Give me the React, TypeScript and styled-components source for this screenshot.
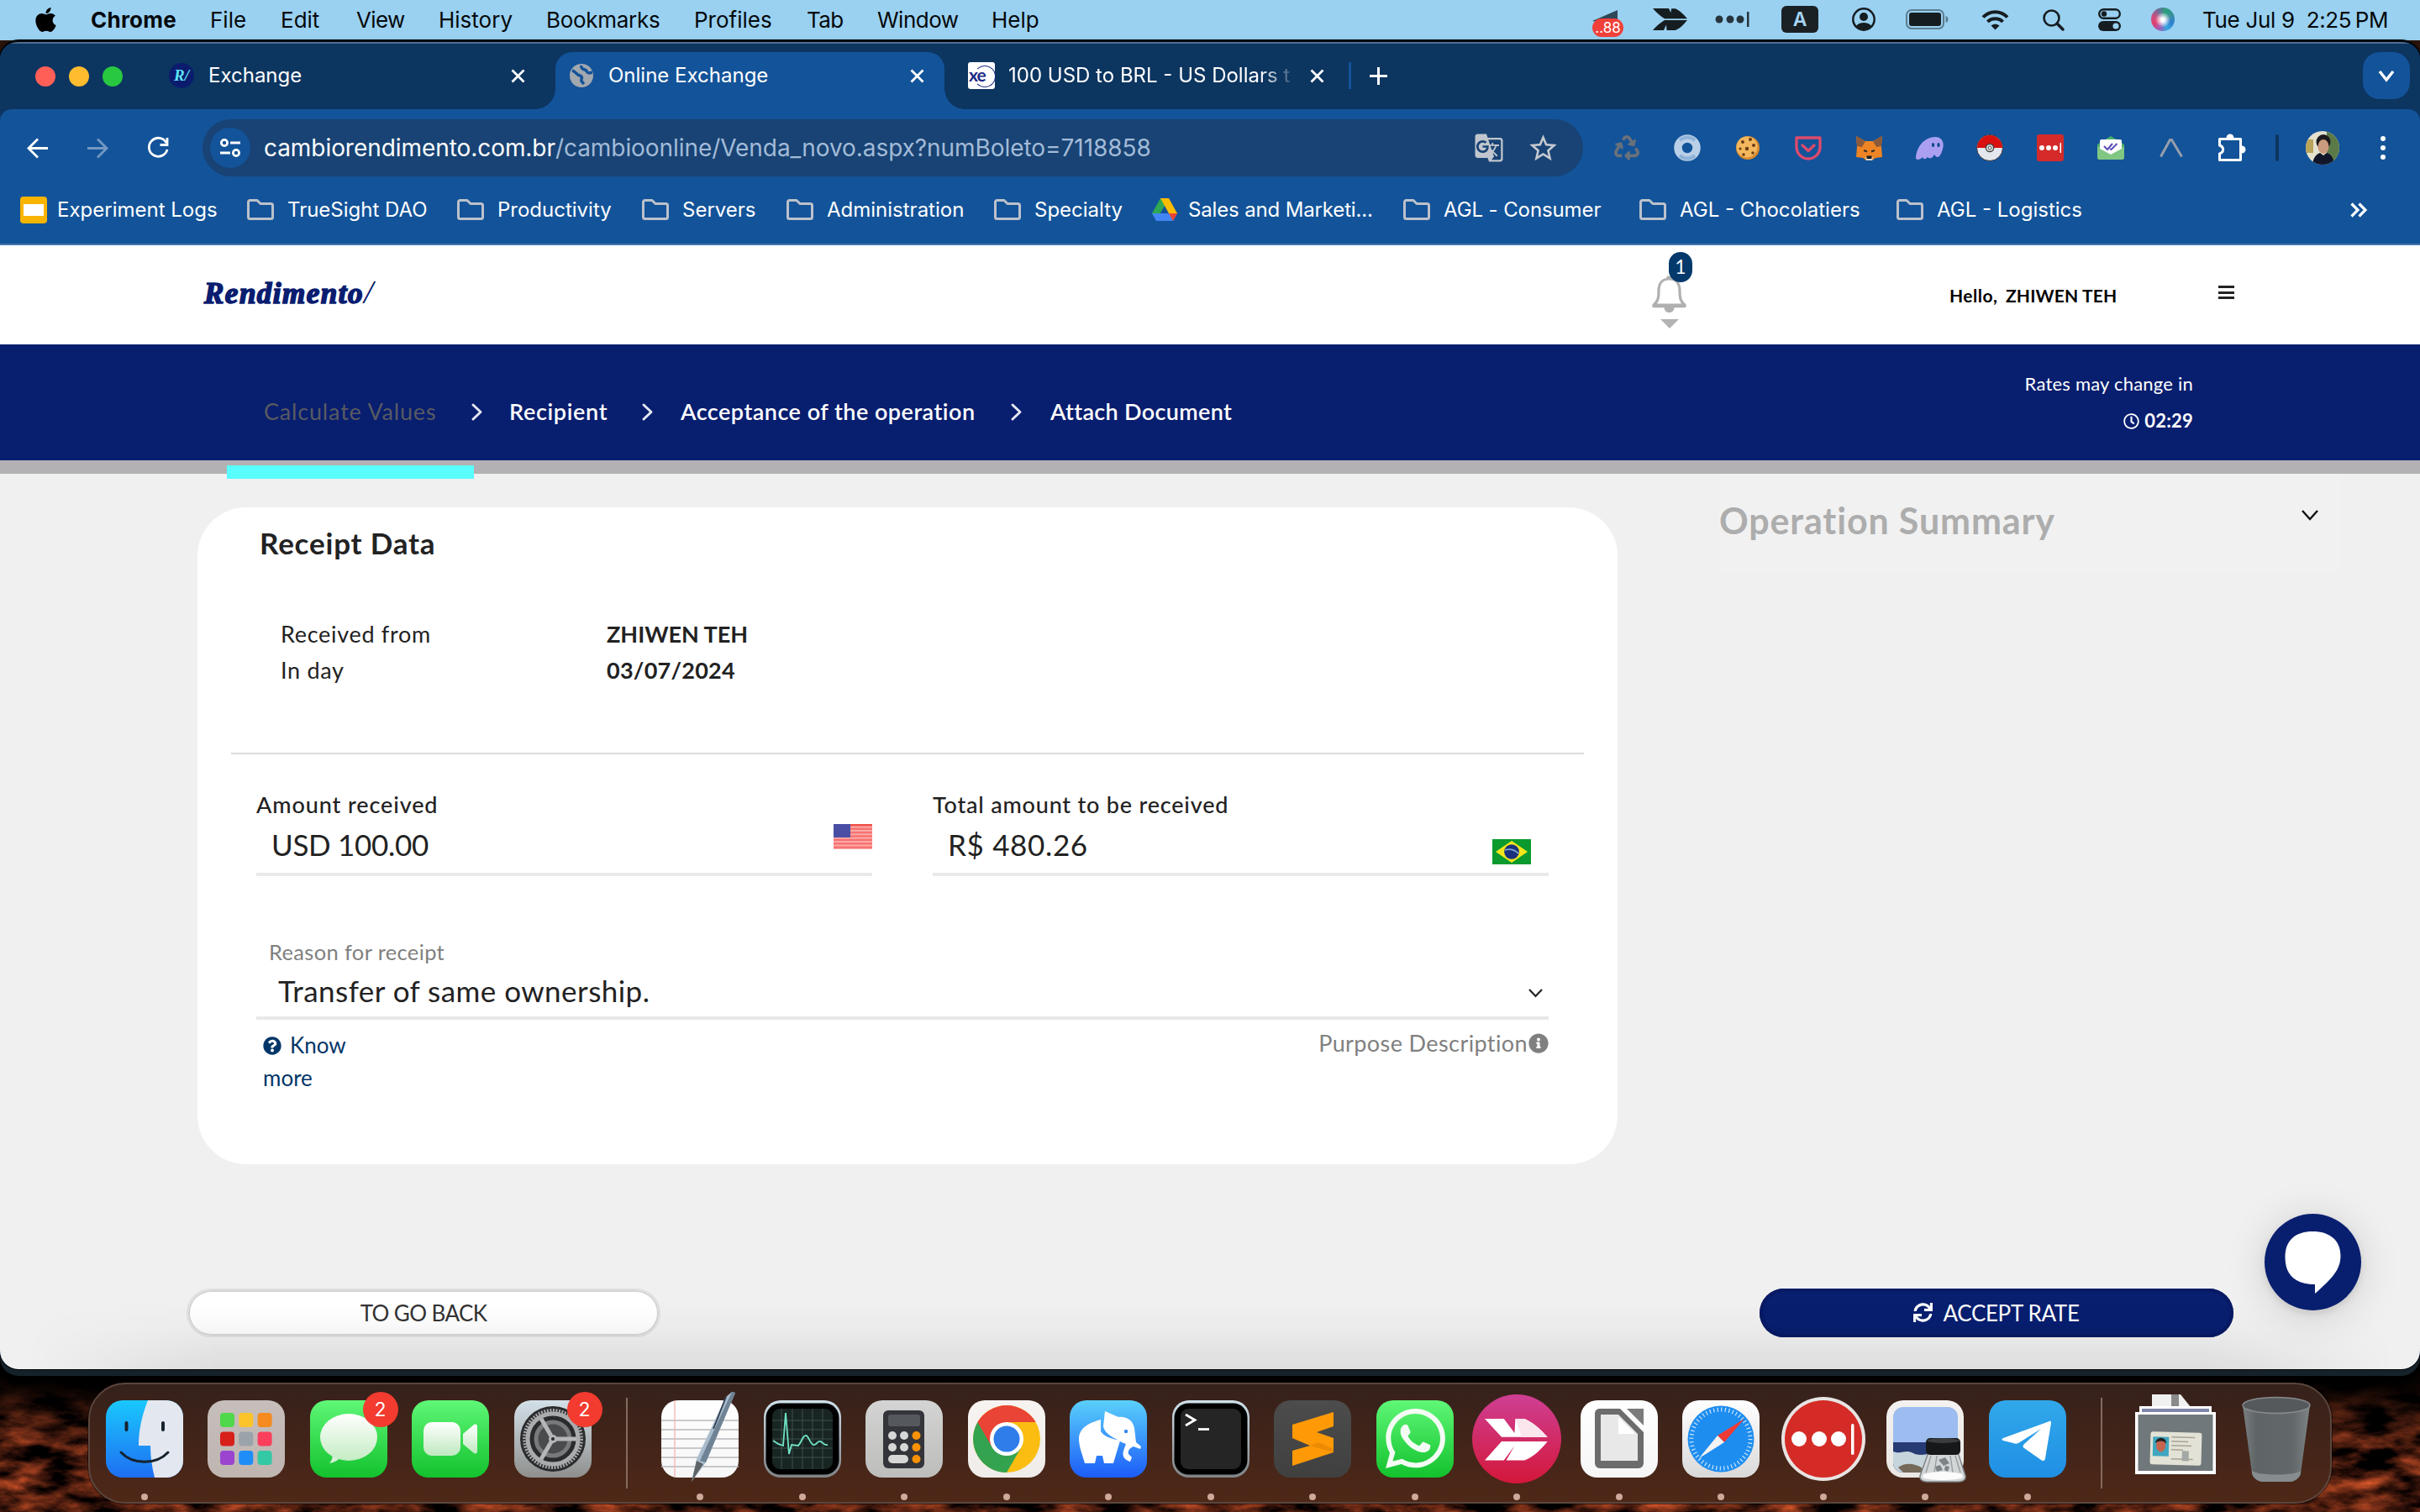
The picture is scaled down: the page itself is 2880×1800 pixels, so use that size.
import React from "react";
import styled, { createGlobalStyle, css } from "styled-components";
import { FaApple, FaInfoCircle, FaQuestionCircle, FaRecycle, FaRegClock, FaSync, FaWhatsapp } from "react-icons/fa";
import { MdGTranslate, MdStarBorder } from "react-icons/md";

const ui = `"Inter", "Liberation Sans", sans-serif`;
const brand = `"Lato", "Open Sans", sans-serif`;

const GlobalStyle = createGlobalStyle`
  * { box-sizing: border-box; }
  body { margin: 0; background: #000; }
  svg { display: block; flex: none; overflow: visible; }
`;

/* ---------- desktop ---------- */

const Desktop = styled.div`
  position: relative;
  width: 2880px;
  height: 1800px;
  overflow: hidden;
  display: flex;
  flex-direction: column;
  font-family: ${ui};
  background: #2a140b;
`;

const WallpaperLayer = styled.div`
  position: absolute;
  left: 0;
  bottom: 0;
  width: 2880px;
  height: 180px;
`;

const MenuBar = styled.div`
  position: relative;
  height: 48px;
  padding: 0 38px 2px 0;
  display: flex;
  align-items: center;
  background: #9ad1f1;
  color: #06131c;
`;

const MenuItem = styled.span<{ $w: number; $ls?: number; $bold?: boolean }>`
  width: ${(p) => p.$w}px;
  font-size: 26px;
  font-weight: ${(p) => (p.$bold ? 700 : 400)};
  letter-spacing: ${(p) => p.$ls ?? 0}px;
  white-space: pre;
  color: #05080b;
`;

const Slot = styled.div<{ $ml?: number; $w?: number }>`
  flex: none;
  margin-left: ${(p) => p.$ml ?? 0}px;
  width: ${(p) => (p.$w ? `${p.$w}px` : "auto")};
  display: flex;
  justify-content: center;
  align-items: center;
`;

const Spacer = styled.div`
  flex: 1;
`;

const TrayBadgeWrap = styled.div`
  position: relative;
  width: 37px;
  height: 48px;
`;

const TrayBadge = styled.span`
  position: absolute;
  left: 0;
  top: 23px;
  width: 37px;
  height: 22px;
  border-radius: 11px;
  background: #f1403a;
  color: #fff;
  font-size: 17px;
  line-height: 22px;
  text-align: center;
`;

const InputBox = styled.div`
  width: 44px;
  height: 32px;
  border-radius: 6px;
  background: #1a2125;
  color: #a5d5f2;
  font-size: 23px;
  font-weight: 600;
  line-height: 33px;
  text-align: center;
`;

const Siri = styled.div`
  width: 28px;
  height: 28px;
  border-radius: 50%;
  background: radial-gradient(circle at 50% 52%, #fff 0 10%, rgba(255, 255, 255, 0) 45%),
    conic-gradient(from 20deg, #27a07c, #3b8f9c, #2f7fd0, #35a5e0, #a05bb5, #e0406f, #c8507f, #6b6f9a, #27a07c);
`;

/* ---------- browser window ---------- */

const Window = styled.div`
  position: relative;
  height: 1582px;
  border-top: 2px solid #05080b;
  border-radius: 22px;
  overflow: hidden;
  display: flex;
  flex-direction: column;
  background: #0c3560;
  box-shadow: 0 0 0 1px #000, 0 8px 0 0 #16222a, 0 16px 14px 6px #000;
`;

const TabStrip = styled.div`
  height: 80px;
  border-top: 2px solid #4f6e8e;
  display: flex;
  align-items: flex-end;
  background: #0c3560;
`;

const Lights = styled.div`
  width: 188px;
  height: 68px;
  padding: 0 0 11px 42px;
  display: flex;
  align-items: center;
  gap: 16px;
`;

const Light = styled.i<{ $c: string }>`
  width: 24px;
  height: 24px;
  border-radius: 50%;
  background: ${(p) => p.$c};
`;

const Tab = styled.div<{ $w: number; $pl: number; $pr: number; $active?: boolean }>`
  position: relative;
  width: ${(p) => p.$w}px;
  height: 68px;
  padding: 0 ${(p) => p.$pr}px 12px ${(p) => p.$pl}px;
  display: flex;
  align-items: center;
  color: #fff;
  font-size: 24px;
  ${(p) =>
    p.$active &&
    css`
      background: #135399;
      border-radius: 20px 20px 0 0;
      &::before,
      &::after {
        content: "";
        position: absolute;
        bottom: 0;
        width: 24px;
        height: 24px;
      }
      &::before {
        left: -24px;
        background: radial-gradient(circle at 0 0, transparent 23.5px, #135399 24px);
      }
      &::after {
        right: -24px;
        background: radial-gradient(circle at 100% 0, transparent 23.5px, #135399 24px);
      }
    `}
`;

const TabTitle = styled.span<{ $ml: number; $fade?: boolean }>`
  flex: 1;
  min-width: 0;
  margin-left: ${(p) => p.$ml}px;
  margin-right: 18px;
  overflow: hidden;
  white-space: nowrap;
  line-height: 34px;
  ${(p) => p.$fade && css`mask-image: linear-gradient(90deg, #000 88%, transparent 101%);`}
`;

const RendimentoFavicon = styled.i`
  width: 30px;
  height: 30px;
  border-radius: 50%;
  background: #0b1c6e;
  color: #5ce4f5;
  font: italic 700 19px/30px "Liberation Serif", serif;
  text-align: center;
`;

const XeFavicon = styled.i`
  position: relative;
  width: 32px;
  height: 32px;
  padding-left: 1px;
  border-radius: 3px;
  background: #fff;
  color: #1c2a86;
  font: 700 21px/29px ${brand};
  letter-spacing: -1px;
  &::after {
    content: "";
    position: absolute;
    left: 7px;
    top: 4px;
    width: 24px;
    height: 24px;
    border: 1.5px solid #1c2a86;
    border-left-color: transparent;
    border-radius: 50%;
  }
`;

const TabDivider = styled.i`
  width: 3px;
  height: 32px;
  margin: 0 22px 24px 0;
  background: #135399;
`;

const StripButton = styled.div`
  width: 56px;
  height: 56px;
  margin: 0 12px 12px auto;
  border-radius: 20px;
  background: #135399;
  display: flex;
  align-items: center;
  justify-content: center;
`;

const NewTab = styled.div`
  height: 68px;
  padding-bottom: 12px;
  display: flex;
  align-items: center;
`;

const Chrome = styled.div`
  background: #135399;
  border-radius: 14px 14px 0 0;
  border-bottom: 2px solid #4577b0;
  height: 162px;
`;

const Toolbar = styled.div`
  height: 92px;
  padding-left: 28px;
  display: flex;
  align-items: center;
`;

const NavButton = styled.div`
  width: 32px;
  margin-right: 40px;
  display: flex;
  justify-content: center;
`;

const Omnibox = styled.div`
  width: 1643px;
  height: 68px;
  margin: 0 16px 0 -3px;
  padding: 0 28px 0 9px;
  border-radius: 34px;
  background: #184374;
  display: flex;
  align-items: center;
  font-size: 28px;
  letter-spacing: -0.06px;
  color: #fff;
`;

const SiteInfo = styled.div`
  width: 48px;
  height: 48px;
  margin-right: 16px;
  border-radius: 50%;
  background: #135399;
  display: flex;
  align-items: center;
  justify-content: center;
`;

const UrlPath = styled.span`
  color: #a3bbd8;
`;

const Extension = styled.div`
  width: 72px;
  height: 40px;
  display: flex;
  align-items: center;
  justify-content: center;
`;

const Bookmarks = styled.div`
  height: 66px;
  padding: 0 0 11px 24px;
  display: flex;
  align-items: center;
  color: #fff;
  font-size: 24px;
`;

const Bookmark = styled.div<{ $w: number; $ls?: number; $gap?: number }>`
  width: ${(p) => p.$w}px;
  display: flex;
  align-items: center;
  gap: ${(p) => p.$gap ?? 16}px;
  letter-spacing: ${(p) => p.$ls ?? 0}px;
  white-space: nowrap;
`;

const SheetIcon = styled.i`
  width: 32px;
  height: 32px;
  border-radius: 4px;
  border: 4px solid #f9b400;
  border-width: 9px 4px;
  background: #fff;
  margin-right: -4px;
`;

const PasswordTile = styled.div`
  width: 32px;
  height: 32px;
  border-radius: 3px;
  background: #d42b2a;
  display: flex;
  align-items: center;
  justify-content: center;
`;

const ToolbarDivider = styled.i`
  width: 4px;
  height: 32px;
  margin: 0 32px 0 16px;
  border-radius: 2px;
  background: #0c3560;
`;

const Avatar = styled.div`
  width: 40px;
  height: 40px;
  border-radius: 50%;
  overflow: hidden;
`;

/* ---------- page ---------- */

const Page = styled.div`
  position: relative;
  flex: 1;
  background: #f0f0f0;
  font-family: ${brand};
  color: #222;
`;

const Header = styled.div`
  height: 118px;
  padding-left: 243px;
  display: flex;
  background: #fff;
`;

const Logo = styled.div`
  width: 1723px;
  padding-top: 34px;
  color: #0a1d70;
  font: italic 700 35px/44px "Liberation Serif", serif;
  letter-spacing: 1.5px;
  -webkit-text-stroke: 1.7px #0a1d70;
`;

const LogoSlash = styled.span`
  font-weight: 400;
  font-size: 40px;
  -webkit-text-stroke: 0;
`;

const Bell = styled.div`
  position: relative;
  width: 41px;
  margin-right: 313px;
  padding-top: 35px;
  display: flex;
  flex-direction: column;
  align-items: center;
`;

const BellBadge = styled.span`
  position: absolute;
  left: 20px;
  top: 8px;
  width: 28px;
  height: 36px;
  border-radius: 14px;
  background: #03396b;
  color: #fff;
  font-size: 23px;
  line-height: 35px;
  text-align: center;
`;

const BellCaret = styled.i`
  margin-top: 7px;
  border: 11px solid transparent;
  border-top: 11px solid #b3b3b3;
  border-bottom: 0;
`;

const Greeting = styled.div`
  width: 320px;
  padding-top: 40px;
  display: flex;
  color: #000;
  font-size: 21px;
  line-height: 39px;
  font-weight: 700;
`;

const Hello = styled.span`
  width: 67px;
  letter-spacing: 0.5px;
`;

const UserName = styled.span`
  letter-spacing: 0.15px;
`;

const Hamburger = styled.div`
  width: 19px;
  height: 16px;
  margin-top: 48px;
  display: flex;
  flex-direction: column;
  justify-content: space-between;
`;

const HamburgerLine = styled.i`
  height: 3px;
  background: #222;
`;

const StepBar = styled.div`
  height: 138px;
  padding: 0 270px 0 314px;
  display: flex;
  background: #081e6f;
  color: #fff;
`;

const Steps = styled.div`
  flex: 1;
  display: flex;
  padding-top: 60px;
  height: 100px;
  align-items: center;
`;

const Step = styled.span<{ $w: number; $ls: number; $done?: boolean }>`
  width: ${(p) => p.$w}px;
  font-size: 27px;
  line-height: 40px;
  font-weight: ${(p) => (p.$done ? 400 : 600)};
  letter-spacing: ${(p) => p.$ls}px;
  color: ${(p) => (p.$done ? "#585a62" : "#fff")};
  white-space: nowrap;
`;

const StepArrow = styled.div<{ $w: number }>`
  width: ${(p) => p.$w}px;
`;

const Rates = styled.div`
  padding-top: 27px;
  display: flex;
  flex-direction: column;
  align-items: flex-end;
  font-size: 22px;
  line-height: 40px;
  letter-spacing: 0.22px;
`;

const Timer = styled.div`
  margin-top: 4px;
  display: flex;
  align-items: center;
  gap: 6px;
  font-weight: 700;
`;

const Progress = styled.div`
  position: relative;
  height: 16px;
  background: #b3b1b3;
`;

const ProgressMark = styled.i`
  position: absolute;
  z-index: 1;
  left: 270px;
  top: 6px;
  width: 294px;
  height: 16px;
  background: #59fefe;
`;

const Main = styled.div`
  height: 822px;
  padding-left: 235px;
  display: flex;
  align-items: flex-start;
`;

const Card = styled.div`
  width: 1690px;
  height: 782px;
  margin: 40px 120px 0 0;
  padding: 22px 82px 0 70px;
  border-radius: 58px;
  background: #fff;
`;

const CardTitle = styled.div`
  padding-left: 4px;
  font-size: 35px;
  line-height: 40px;
  font-weight: 700;
  letter-spacing: 0.8px;
`;

const Facts = styled.div`
  margin: 67px 0 77px 29px;
`;

const Fact = styled.div`
  display: grid;
  grid-template-columns: 388px 1fr;
  font-size: 27px;
  line-height: 43px;
  letter-spacing: 0.7px;
`;

const FactValue = styled.b<{ $ls: number }>`
  letter-spacing: ${(p) => p.$ls}px;
`;

const Rule = styled.div`
  width: 1610px;
  height: 2px;
  margin-left: -30px;
  background: #dcdcdf;
`;

const Amounts = styled.div`
  margin-top: 39px;
  display: grid;
  grid-template-columns: 733px 733px;
  column-gap: 72px;
`;

const AmountLabel = styled.div<{ $ls: number }>`
  padding-top: 1px;
  font-size: 27px;
  line-height: 39px;
  font-weight: 500;
  letter-spacing: ${(p) => p.$ls}px;
`;

const AmountValue = styled.div<{ $ls: number; $flagTop: number; $flagRight: number }>`
  height: 66px;
  padding: 4px 0 0 18px;
  border-bottom: 4px solid #e9e9e9;
  display: flex;
  justify-content: space-between;
  font-size: 35px;
  line-height: 49px;
  letter-spacing: ${(p) => p.$ls}px;
  svg {
    margin: ${(p) => p.$flagTop}px ${(p) => p.$flagRight}px 0 0;
  }
`;

const ReasonLabel = styled.div`
  margin: 70px 0 0 15px;
  color: #808080;
  font-size: 25.5px;
  line-height: 40px;
  letter-spacing: 0.35px;
`;

const Select = styled.div`
  height: 61px;
  padding: 0 7px 4px 26px;
  border-bottom: 4px solid #e9e9e9;
  display: flex;
  align-items: center;
  justify-content: space-between;
  font-size: 35px;
  line-height: 53px;
  letter-spacing: 0.46px;
  svg {
    margin-top: 4px;
  }
`;

const Hints = styled.div`
  padding: 11px 0 0 8px;
  display: flex;
  justify-content: space-between;
  align-items: flex-start;
`;

const KnowMore = styled.a`
  width: 120px;
  color: #033668;
  font-size: 26px;
  line-height: 39px;
  svg {
    display: inline-block;
    vertical-align: -2px;
    margin-right: 10px;
  }
`;

const Purpose = styled.div`
  display: flex;
  align-items: center;
  gap: 1px;
  margin-top: -3px;
  color: #808080;
  font-size: 27px;
  line-height: 40px;
  letter-spacing: 0.4px;
`;

const Summary = styled.div`
  width: 740px;
  height: 118px;
  padding: 32px 26px 0 1px;
  background: #f1f1f1;
  display: flex;
  justify-content: space-between;
  color: #adadad;
  font-size: 43px;
  line-height: 48px;
  font-weight: 700;
  letter-spacing: 0.85px;
  svg {
    margin-top: 11px;
  }
`;

const Actions = styled.div`
  margin-top: 148px;
  padding: 0 222px;
  display: flex;
  justify-content: space-between;
`;

const PillButton = styled.div<{ $primary?: boolean }>`
  width: 564px;
  height: 58px;
  border-radius: 29px;
  display: flex;
  align-items: center;
  justify-content: center;
  gap: 12px;
  font-size: 26px;
  padding-bottom: 1px;
  ${(p) =>
    p.$primary
      ? css`
          background: #081e6f;
          color: #fff;
          letter-spacing: -0.33px;
          box-shadow: inset 0 0 0 4px #071a63;
        `
      : css`
          background: linear-gradient(#fff 60%, #fafafa);
          color: #333;
          letter-spacing: -0.6px;
          border: 2px solid #dfdfdf;
          box-shadow: inset 0 0 0 2px #d4d4d4;
        `}
`;

const BottomShade = styled.div`
  position: absolute;
  left: 0;
  right: 0;
  bottom: 0;
  height: 80px;
  background: linear-gradient(rgba(0, 0, 0, 0), rgba(0, 0, 0, 0.02) 40%, rgba(0, 0, 0, 0.08));
  mask-image: linear-gradient(90deg, transparent 30px, #000 260px, #000 2620px, transparent 2850px);
  pointer-events: none;
`;

const ChatButton = styled.div`
  position: absolute;
  left: 2695px;
  top: 1153px;
  width: 115px;
  height: 115px;
  border-radius: 50%;
  background: #081e6f;
  box-shadow: 0 6px 50px rgba(0, 0, 0, 0.14), 0 4px 10px rgba(0, 0, 0, 0.1);
`;

/* ---------- dock ---------- */

const Dock = styled.div`
  position: relative;
  width: 2670px;
  height: 144px;
  margin: 16px 0 0 105px;
  padding-left: 4px;
  border: 2px solid #5b463d;
  border-radius: 44px;
  display: flex;
  background: linear-gradient(#35211b, #452519 60%, #4e2817);
  box-shadow: 0 0 0 1px rgba(0, 0, 0, 0.5);
`;

const DockCell = styled.div<{ $w?: number; $running?: boolean }>`
  position: relative;
  width: ${(p) => p.$w ?? 121.5}px;
  padding-top: 19px;
  display: flex;
  flex-direction: column;
  align-items: center;
  ${(p) =>
    p.$running &&
    css`
      &::after {
        content: "";
        width: 8px;
        height: 8px;
        margin-top: 19px;
        border-radius: 50%;
        background: #cfa99b;
      }
    `}
`;

const DockDivider = styled.i<{ $l: number; $r: number }>`
  width: 2px;
  height: 108px;
  margin: 16px ${(p) => p.$r}px 0 ${(p) => p.$l}px;
  background: #856a5e;
`;

const DockBadge = styled.span`
  position: absolute;
  right: 2px;
  top: 9px;
  width: 42px;
  height: 42px;
  border-radius: 50%;
  background: #f33b2f;
  color: #fff;
  font-size: 23px;
  line-height: 42px;
  text-align: center;
`;

/* ---------- drawings ---------- */

const Wallpaper = () => (
  <WallpaperLayer>
    <svg width="2880" height="180">
      <defs>
        <filter id="rock" x="0" y="0" width="100%" height="100%" colorInterpolationFilters="sRGB">
          <feTurbulence type="fractalNoise" baseFrequency="0.02 0.05" numOctaves="6" seed="7" />
          <feColorMatrix values="1.5 0 0 0 -0.48  0.62 0 0 0 -0.21  0.3 0 0 0 -0.1  0 0 0 0 1" />
        </filter>
        <linearGradient id="fall" x1="0" x2="0" y1="0" y2="1">
          <stop offset="0" stopColor="#000" />
          <stop offset=".2" stopColor="#000" stopOpacity=".8" />
          <stop offset=".55" stopColor="#000" stopOpacity="0" />
        </linearGradient>
      </defs>
      <rect width="2880" height="180" filter="url(#rock)" />
      <rect width="2880" height="180" fill="url(#fall)" />
    </svg>
  </WallpaperLayer>
);

const Feather = ({ size, color }: { size: number; color: string }) => (
  <svg width={size} height={(size * 26) / 42} viewBox="0 0 42 26" fill={color}>
    <path d="M0 0H19L21.5 5L22 0.3H27C32 2.5 37 7.5 41 12.2H14C9 9 4 5 0 0Z" />
    <path d="M0 26H13L16 19.5L16.5 26H27C32 24 37 19 41 14H14C9 17 4 21 0 26Z" />
  </svg>
);

const Cross = () => (
  <svg width="17" height="17" viewBox="0 0 17 17" stroke="#fff" strokeWidth="2.8">
    <path d="M1.5 1.5l14 14M15.5 1.5l-14 14" />
  </svg>
);

const Chevron = ({ w, h, color, t }: { w: number; h: number; color: string; t: number }) => (
  <svg width={w} height={h} fill="none" stroke={color} strokeWidth={t}>
    <path d={`M1 1L${w / 2} ${h - 1}L${w - 1} 1`} />
  </svg>
);

const RightChevron = () => (
  <svg width="13" height="21" fill="none" stroke="#e4e7f2" strokeWidth="3" strokeLinecap="round" strokeLinejoin="round">
    <path d="M2 2l9 8.5-9 8.5" />
  </svg>
);

const Folder = () => (
  <svg width="32" height="25" viewBox="0 0 32 25" fill="none" stroke="#bcc1cb" strokeWidth="3" strokeLinejoin="round">
    <path d="M1.5 3.5a2 2 0 012-2H12l4 4h12.500a2 2 0 012 2V21.500a2 2 0 01-2 2H3.500a2 2 0 01-2-2z" />
  </svg>
);

const Drive = () => (
  <svg width="30" height="27" viewBox="0 0 30 27">
    <path d="M10 0h10L15 9 5 26 0 18z" fill="#2fa853" />
    <path d="M10 0h10l10 18H20z" fill="#fbbc05" />
    <path d="M0 18h30l-5 9H5z" fill="#4285f4" />
    <path d="M20 18h10l-5 9z" fill="#ea4335" />
  </svg>
);

const Globe = () => (
  <svg width="28" height="28" viewBox="0 0 28 28">
    <circle cx="14" cy="14" r="14" fill="#a2a8b0" />
    <path d="M3 8c4 1 5 5 9 6 2 .5 3 2 2 4-1 3 1 4 3 6M14 2c-1 3 1 4 4 5 3 1 2 4 5 4 2 0 3-1 4-1" stroke="#135399" strokeWidth="3.500" fill="none" />
  </svg>
);

const MenuTray = () => (
  <>
    <TrayBadgeWrap>
      <svg width="30" height="28" viewBox="0 0 30 28">
        <path d="M0 26L30 13v15H10z" fill="#2e4858" />
      </svg>
      <TrayBadge>..88</TrayBadge>
    </TrayBadgeWrap>
    <Slot $ml={35}>
      <Feather size={42} color="#161d21" />
    </Slot>
    <Slot $ml={32}>
      <svg width="41" height="20" fill="#26343d">
        <circle cx="5" cy="10" r="4.500" />
        <circle cx="18" cy="10" r="4.500" />
        <circle cx="30" cy="10" r="4.500" />
        <rect x="38" y="1" width="2.500" height="18" />
      </svg>
    </Slot>
    <Slot $ml={38}>
      <InputBox>A</InputBox>
    </Slot>
    <Slot $ml={40}>
      <svg width="28" height="28" viewBox="0 0 28 28">
        <circle cx="14" cy="14" r="12.700" fill="none" stroke="#161d21" strokeWidth="2.500" />
        <circle cx="14" cy="11" r="5" fill="#161d21" />
        <path d="M5 22c3-5.500 15-5.500 18 0-4 5.500-14 5.500-18 0z" fill="#161d21" />
      </svg>
    </Slot>
    <Slot $ml={36}>
      <svg width="51" height="24">
        <rect x="1" y="1" width="44" height="22" rx="6" fill="none" stroke="#5b7d90" strokeWidth="2" />
        <rect x="4" y="4" width="38" height="16" rx="3" fill="#161d21" />
        <path d="M47.500 8c4 1 4 7 0 8z" fill="#5b7d90" />
      </svg>
    </Slot>
    <Slot $ml={39}>
      <svg width="33" height="25" viewBox="0 0 33 25" fill="none" stroke="#161d21" strokeWidth="4">
        <path d="M2 9.500C10 1 23 1 31 9.500M7.500 15C12 10 21 10 25.500 15" />
        <path d="M16.500 24.500l-5-5c3-2.500 7-2.500 10 0z" fill="#161d21" stroke="none" />
      </svg>
    </Slot>
    <Slot $ml={40}>
      <svg width="25" height="25" fill="none" stroke="#161d21" strokeWidth="2.600">
        <circle cx="10.500" cy="10.500" r="9" />
        <path d="M17 17l7 7" strokeWidth="3.500" strokeLinecap="round" />
      </svg>
    </Slot>
    <Slot $ml={41}>
      <svg width="27" height="27">
        <rect x="1.200" y="1.200" width="24.600" height="10.600" rx="5.300" fill="none" stroke="#161d21" strokeWidth="2.400" />
        <circle cx="7" cy="6.500" r="3.200" fill="#161d21" />
        <rect y="15" width="27" height="12" rx="6" fill="#161d21" />
        <circle cx="21" cy="21" r="3.600" fill="#9ad1f1" />
      </svg>
    </Slot>
    <Slot $ml={36}>
      <Siri />
    </Slot>
    <Slot $ml={33} $w={221}>
      <MenuItem $w={221} $ls={-0.33}>{"Tue Jul 9  2:25\u2009PM"}</MenuItem>
    </Slot>
  </>
);

const Extensions = () => (
  <>
    <Extension>
      <FaRecycle size={30} color="#69717a" />
    </Extension>
    <Extension>
      <svg width="32" height="32">
        <circle cx="16" cy="16" r="11" fill="none" stroke="#b9d0e8" strokeWidth="9.500" />
        <path d="M7 7a13 13 0 0118 0M25 25a13 13 0 01-18 0" stroke="#8fb3d8" strokeWidth="4" fill="none" />
      </svg>
    </Extension>
    <Extension>
      <svg width="28" height="28">
        <circle cx="14" cy="14" r="14" fill="#d98a2c" />
        <circle cx="13" cy="13" r="12.500" fill="#f3b75e" />
        <g fill="#6b3d14">
          <circle cx="8" cy="7" r="2" />
          <circle cx="17" cy="4" r="2" />
          <circle cx="21" cy="11" r="2" />
          <circle cx="13" cy="15" r="2.200" />
          <circle cx="5" cy="15" r="1.600" />
          <circle cx="9" cy="22" r="1.800" />
          <circle cx="20" cy="20" r="1.800" />
        </g>
      </svg>
    </Extension>
    <Extension>
      <svg width="32" height="29" fill="none" stroke="#dc4a6c" strokeWidth="3.400" strokeLinejoin="round">
        <path d="M2 2h28v11a14 14 0 01-28 0z" />
        <path d="M9 11l7 6.500 7-6.500" strokeLinecap="round" />
      </svg>
    </Extension>
    <Extension>
      <svg width="31" height="29" viewBox="0 0 31 29">
        <path d="M0 0l11 6h9L31 0l-1 12 1 13-8 1-4 3h-7l-4-3-8-1L1 12z" fill="#ee8424" />
        <path d="M0 0l11 6-4 7-6-1zM31 0L20 6l4 7 6-1z" fill="#8c5a3b" />
        <path d="M12 29l-1-4h9l-1 4z" fill="#dcd3cf" />
        <path d="M12.500 23.500h6V27h-6z" fill="#1c1c1c" />
        <path d="M9 17l4 1.500M22 17l-4 1.500" stroke="#33312f" strokeWidth="2" />
      </svg>
    </Extension>
    <Extension>
      <svg width="33" height="27" viewBox="0 0 33 27">
        <path d="M0 24C1 12 10 0 23 0c9 0 11 8 9 14-1 5-4 11-7 10-2-1-2-2-3-3-2 4-5 6-8 3-3 3-5 3-6 0-3 4-9 4-8 0z" fill="#ab9ff2" />
        <rect x="19" y="7" width="3" height="5" rx="1.500" fill="#134b8c" />
        <rect x="25.500" y="7" width="3" height="5" rx="1.500" fill="#134b8c" />
      </svg>
    </Extension>
    <Extension>
      <svg width="32" height="32">
        <circle cx="16" cy="16" r="15.500" fill="#e4e8ee" stroke="#38303c" />
        <path d="M1 16a15 15 0 0130 0z" fill="#d8100f" />
        <circle cx="16" cy="16" r="4.600" fill="#eee" stroke="#444" strokeWidth="1.500" />
        <circle cx="16" cy="16" r="2" fill="#fff" stroke="#444" />
      </svg>
    </Extension>
    <Extension>
      <PasswordTile>
        <svg width="26" height="12" fill="#fff">
          <circle cx="3" cy="6" r="3" />
          <circle cx="11" cy="6" r="3" />
          <circle cx="19" cy="6" r="3" />
          <rect x="24.500" width="1.500" height="12" />
        </svg>
      </PasswordTile>
    </Extension>
    <Extension>
      <svg width="32" height="28" viewBox="0 0 32 28">
        <path d="M0 10L16 0l16 10v15a3 3 0 01-3 3H3a3 3 0 01-3-3z" fill="#4caf6a" />
        <path d="M0 12l16 10 16-10v13a3 3 0 01-3 3H3a3 3 0 01-3-3z" fill="#81c784" />
        <path d="M5 4h22a2 2 0 012 2v9l-13 7-13-7V6a2 2 0 012-2z" fill="#fff" />
        <path d="M8 12l4 4 6-7M15 15l1.500 1 7-7" stroke="#5c4bb8" strokeWidth="2" fill="none" />
      </svg>
    </Extension>
    <Extension>
      <svg width="28" height="22" fill="none" stroke="#969fab" strokeWidth="3">
        <path d="M1.500 21.500L12.500 1.500h2L26.500 21.500" />
      </svg>
    </Extension>
    <Extension>
      <svg width="32" height="32" viewBox="0 0 32 32" fill="none" stroke="#fff" strokeWidth="3" strokeLinejoin="round">
        <path d="M1.500 5.500H26.500V30.500H1.500V23C7 21 7 15 1.500 13Z" />
        <path d="M9.500 4a4.500 4.500 0 019 0zM28 13.500a4.500 4.500 0 010 9z" fill="#fff" stroke="none" />
      </svg>
    </Extension>
  </>
);

const Portrait = () => (
  <Avatar>
    <svg width="40" height="40">
      <rect width="40" height="40" fill="#e6e2cf" />
      <rect x="25" width="15" height="40" fill="#5c7a48" />
      <rect y="10" width="9" height="16" fill="#b9a458" />
      <ellipse cx="21" cy="13" rx="8.500" ry="9" fill="#1c1a1e" />
      <ellipse cx="21" cy="18.500" rx="6.500" ry="8.500" fill="#c99a7c" />
      <path d="M13.500 14c2-5 12-6 15 0l-1-7H15z" fill="#1c1a1e" />
      <path d="M8 40c1-10 6-13 9-14l4 3 4-3c4 1 8 4 9 14z" fill="#12162a" />
    </svg>
  </Avatar>
);

const UsFlag = () => (
  <svg width="46" height="30">
    <rect width="46" height="30" fill="#fbb0ae" />
    {[0, 1, 2, 3, 4, 5, 6].map((i) => (
      <rect key={i} y={i * 4.4} width="46" height="2.600" fill={i ? "#f77371" : "#ef5149"} />
    ))}
    <rect width="20" height="16" fill="#4a4fa5" />
  </svg>
);

const BrFlag = () => (
  <svg width="46" height="30">
    <rect width="46" height="30" fill="#0b9a2d" />
    <path d="M23 2L42 15 23 28 4 15z" fill="#f3e61d" />
    <circle cx="23" cy="15" r="8.800" fill="#17317d" />
    <path d="M15 13c6-2 12 0 16 4" stroke="#7fa6cf" strokeWidth="1.800" fill="none" />
  </svg>
);

const BellIcon = () => (
  <svg width="41" height="46" viewBox="0 0 41 46" fill="none" stroke="#b0b0b0">
    <path d="M2 36C7 32 8 28 8 19 8 10 13 5 20.500 5S33 10 33 19c0 9 1 13 6 17z" strokeWidth="3.200" strokeLinejoin="round" />
    <path d="M2 37.500h37" strokeWidth="3.500" strokeLinecap="round" />
    <path d="M18 1.500h5l1 3h-7z" fill="#b0b0b0" stroke="none" />
    <path d="M14.500 39h12c0 8-12 8-12 0z" fill="#b0b0b0" stroke="none" />
  </svg>
);

/* App tiles share one rounded plate on a 92-unit grid. */
const Tile = ({ id, from, to, children }: { id: string; from: string; to: string; children?: React.ReactNode }) => (
  <svg width="92" height="92" viewBox="0 0 92 92">
    <defs>
      <linearGradient id={id} x1="0" x2="0" y1="0" y2="1">
        <stop offset="0" stopColor={from} />
        <stop offset="1" stopColor={to} />
      </linearGradient>
      <clipPath id={`${id}-c`}>
        <rect width="92" height="92" rx="20" />
      </clipPath>
    </defs>
    <rect width="92" height="92" rx="20" fill={`url(#${id})`} />
    {children}
  </svg>
);

const Finder = () => (
  <Tile id="finder" from="#1ac8fd" to="#1e6ef2">
    <path d="M50 0C43 18 39 35 39 54H53C53 68 55 80 58 92H92V0Z" fill="#e3e7ef" clipPath="url(#finder-c)" />
    <path d="M24.500 27v8M68 27v8" stroke="#16222e" strokeWidth="4" strokeLinecap="round" />
    <path d="M18 62C32 77 60 77 74 62" stroke="#16222e" strokeWidth="3" fill="none" strokeLinecap="round" />
  </Tile>
);

const launchColors = ["#4fd84b", "#fcc42b", "#f58a1f", "#d8201b", "#9aa3a9", "#fb3f5c", "#9a44cf", "#1e8df8", "#35c8a4"];
const Launchpad = () => (
  <Tile id="launch" from="#c6bebb" to="#bfb5b1">
    {launchColors.map((c, i) => (
      <rect key={c} x={15 + (i % 3) * 22.3} y={15 + Math.floor(i / 3) * 22.5} width="17" height="17" rx="4" fill={c} />
    ))}
  </Tile>
);

const Messages = () => (
  <Tile id="msg" from="#5ff777" to="#12c22d">
    <defs>
      <linearGradient id="bubble" x1="0" x2="0" y1="0" y2="1">
        <stop offset="0" stopColor="#ffffff" />
        <stop offset="1" stopColor="#c4ecc4" />
      </linearGradient>
    </defs>
    <path d="M27 62c0 6-1 10-4 13 6-1 11-4 14-8z" fill="#d9f0d8" />
    <ellipse cx="46" cy="44" rx="34" ry="28" fill="url(#bubble)" />
  </Tile>
);

const FaceTime = () => (
  <Tile id="ft" from="#5ff777" to="#12c22d">
    <defs>
      <linearGradient id="cam" x1="0" x2="0" y1="0" y2="1">
        <stop offset="0" stopColor="#ffffff" />
        <stop offset="1" stopColor="#bfe9c0" />
      </linearGradient>
    </defs>
    <rect x="14" y="26" width="44" height="40" rx="10" fill="url(#cam)" />
    <path d="M61 40L74 29c2-1 4 0 4 2v30c0 2-2 3-4 2L61 52z" fill="url(#cam)" />
  </Tile>
);

const Settings = () => (
  <Tile id="set" from="#d3e0e8" to="#8f8f8d">
    <circle cx="46" cy="46" r="39" fill="#2a2b2d" />
    <circle cx="46" cy="46" r="33.500" fill="none" stroke="#a4a6a8" strokeWidth="5" strokeDasharray="2 1.500" />
    <circle cx="46" cy="46" r="30" fill="none" stroke="#a9abad" strokeWidth="5" />
    <circle cx="46" cy="46" r="20" fill="#4a4b4d" stroke="#77797b" strokeWidth="5" />
    <path d="M46 46L74 46M46 46L32 22M46 46L32 70" stroke="#b4b6b8" strokeWidth="5" />
    <circle cx="46" cy="46" r="5" fill="#b4b6b8" />
    <circle cx="46" cy="46" r="2" fill="#2a2b2d" />
  </Tile>
);

const TextEditor = () => (
  <Tile id="txt" from="#ffffff" to="#f6f6f6">
    <path d="M0 24H92M0 35H92M0 46H92M0 57H92M0 68H92M0 79H92" stroke="#b7b9bd" strokeWidth="1.300" />
    <path d="M16 0V92" stroke="#f4b4b4" strokeWidth="1.300" />
    <path d="M84-10l4 1L53 74 36 97 42 70 77-4z" fill="#a8bccd" />
    <path d="M84-10l4 1L53 74l-7-2z" fill="#6f8394" />
    <path d="M42 72l8 4-14 21z" fill="#5e6367" />
    <path d="M77-4l-15 38" stroke="#38475a" strokeWidth="2" />
  </Tile>
);

const Activity = () => (
  <Tile id="act" from="#cfe0ea" to="#7f8386">
    <rect x="2.500" y="3.500" width="87" height="85" rx="17" fill="#000" />
    <rect x="10" y="10" width="72" height="72" rx="9" fill="#182523" />
    <path d="M10 24H82M10 35H82M10 46H82M10 57H82M10 68H82M21 10V82M34 10V82M46 10V82M58 10V82M70 10V82" stroke="#3d504d" strokeWidth="1" />
    <path d="M11 48c5 4 8 5 12 6L26 15l4 49 3-11 8 1c4-4 5-12 9-12s5 12 10 11c4-1 4-5 7-4 3 0 4 5 9 4" stroke="#6fe3c5" strokeWidth="1.800" fill="none" />
  </Tile>
);

const Calculator = () => (
  <Tile id="calc" from="#d3d4d3" to="#bdbdbb">
    <rect x="21" y="12" width="49" height="69" rx="6" fill="#33353a" />
    <rect x="27" y="17" width="38" height="14" rx="3" fill="#55585d" />
    {[42, 56, 70].map((y) => (
      <g key={y}>
        {y < 70 && (
          <>
            <circle cx="32" cy={y} r="5" fill="#d6d6d6" />
            <circle cx="46" cy={y} r="5" fill="#d6d6d6" />
          </>
        )}
        <circle cx="60.500" cy={y} r="5" fill="#fb9206" />
      </g>
    ))}
    <rect x="27" y="65" width="24" height="10" rx="5" fill="#d6d6d6" />
  </Tile>
);

const ChromeApp = () => (
  <Tile id="chr" from="#f7f3f1" to="#efece9">
    <circle cx="46" cy="46" r="40" fill="#fbbd12" />
    <path d="M11.400 26A40 40 0 0046 86L63.300 56 46 46z" fill="#34a350" />
    <path d="M11.400 26A40 40 0 0180.600 26H46L28.700 56z" fill="#e94435" />
    <circle cx="46" cy="46" r="20" fill="#fff" />
    <circle cx="46" cy="46" r="15.500" fill="#2f7de9" />
  </Tile>
);

const Elephant = () => (
  <Tile id="ele" from="#5ad0fb" to="#1c5cf8">
    <path
      d="M11 45C12 32 23 27 37 23L37 37C40 42 47 45 56 47L60 48 52 75H41L39 66H32L30 75H18C15 64 11 56 11 45Z"
      fill="#fff"
    />
    <path
      d="M42 13L58 20C68 19 75 24 77 33L79 50 85 55 84 58 76 55C71 57 69 60 70 64L74 68 72 73C66 71 62 68 64 60L67 52 62 50 55 46C45 41 41 36 40 31Z"
      fill="#fff"
    />
    <circle cx="67" cy="37" r="2.200" fill="#3588f9" />
  </Tile>
);

const Terminal = () => (
  <Tile id="term" from="#cfe0ea" to="#7f8386">
    <rect x="2.500" y="3.500" width="87" height="85" rx="17" fill="#000" />
    <rect x="10" y="10" width="72" height="72" rx="9" fill="#252525" />
    <path d="M16 17l11 6.500-11 6.500" stroke="#fff" strokeWidth="2.800" fill="none" />
    <path d="M31 34.500h13" stroke="#fff" strokeWidth="2.800" />
  </Tile>
);

const Editor = () => (
  <Tile id="ed" from="#4c4c4c" to="#404040">
    <path d="M71 14L22 29V45L43 54 22 60V78L71 62V45L51 38 71 31Z" fill="#ff9a06" />
    <path d="M43 54L71 62V58L53 50Z" fill="#d87c00" opacity=".5" />
  </Tile>
);

const WhatsApp = () => (
  <Tile id="wa" from="#5ff777" to="#12c22d">
    <FaWhatsapp x="6" y="5" size={81} color="#f4fbf4" />
  </Tile>
);

const Skitch = () => (
  <svg width="106" height="92" viewBox="0 7 106 92">
    <defs>
      <linearGradient id="sk" x1="0" x2="0" y1="0" y2="1">
        <stop offset="0" stopColor="#cf3f93" />
        <stop offset="1" stopColor="#d3173a" />
      </linearGradient>
    </defs>
    <circle cx="53" cy="53" r="53" fill="url(#sk)" />
    <g transform="translate(15 29) scale(1.82 1.9)" fill="#fff">
      <path d="M0 0H12.500L19.500 9 20 0H26C32 2.500 37 7 41 11.500H11Z" />
      <path d="M0 26H12.500L19.500 17 14 26H26C32 24 37 19 41 14.200H11Z" />
      <path d="M20 0H26C32 2.500 37 7 41 11.500H24Z" fill="#fbe6ee" />
    </g>
  </svg>
);

const Office = () => (
  <Tile id="off" from="#ffffff" to="#f6f6f6">
    <path d="M22 10H47L75 38V75a6 6 0 01-6 6H23a6 6 0 01-6-6V16a6 6 0 015-6z" fill="#6c6c6c" />
    <path d="M24 17H45L68 40V72H24z" fill="#e8e8e8" />
    <path d="M45 20V40H65z" fill="#fff" />
    <path d="M55 10H75V30z" fill="#7b7b7b" />
  </Tile>
);

const Safari = () => (
  <Tile id="saf" from="#ffffff" to="#d9d9d9">
    <circle cx="46" cy="46" r="39.500" fill="#1e8df0" />
    <circle cx="46" cy="46" r="35" fill="none" stroke="#cbe6fb" strokeWidth="5" strokeDasharray="1.200 3.380" />
    <path d="M74 22L50 50 42 42z" fill="#ee3b35" />
    <path d="M20 69L50 50 42 42z" fill="#f3f3f3" />
  </Tile>
);

const LastPass = () => (
  <svg width="100" height="92" viewBox="0 4 100 92">
    <circle cx="50" cy="50" r="50" fill="#e8e4e3" />
    <circle cx="50" cy="50" r="46" fill="#d42b26" />
    <g fill="#fff">
      <circle cx="21" cy="50" r="9" />
      <circle cx="45" cy="50" r="9" />
      <circle cx="68" cy="50" r="9" />
      <rect x="83" y="32" width="3.500" height="37" rx="1.700" />
    </g>
  </svg>
);

const Preview = () => (
  <Tile id="pre" from="#f4f2f0" to="#e9e6e3">
    <rect x="8" y="8" width="77" height="78" rx="12" fill="#9dbcf0" />
    <path d="M8 50H85V74a12 12 0 01-12 12H20A12 12 0 018 74z" fill="#263a74" />
    <path d="M8 61c10 4 14-3 24 2s20-2 30 2v21H20A12 12 0 018 74z" fill="#c6d5dc" />
    <path d="M14 80c8-6 20-6 32 3v3H20z" fill="#75695a" />
    <path d="M50 62H85L94 90c1 5-4 7-8 7H48c-4 0-9-2-8-7z" fill="#d3d6d7" stroke="#80868a" strokeWidth="1.500" />
    <path d="M53 66l-6 20M82 66l6 20M60 66l-3 20M76 66l3 20" stroke="#9aa0a3" strokeWidth="1.500" />
    <path d="M44 88c12-4 34-4 46 0l1 4c-8 4-40 4-48 0z" fill="#fbfbfb" />
    <path d="M62 71l8-3 5 7-7 3zM58 79l6-2 3 6-7 2zM70 78l5 1-2 6-4-2z" fill="#7d8487" />
    <rect x="47" y="45" width="41" height="20" rx="5" fill="#17181a" />
    <ellipse cx="67.500" cy="48" rx="19" ry="3" fill="#3a3c3f" />
  </Tile>
);

const Telegram = () => (
  <Tile id="tg" from="#31a8ea" to="#1f8fe4">
    <path d="M72 25c1-1 2 0 2 2L67 69c0 3-3 4-5 2L42 57c-2-1-2-3 0-5L62 34 35 51c-2 1-4 1-6 0l-12-3c-2-1-2-2 0-3z" fill="#fff" />
  </Tile>
);

const Stack = () => (
  <svg width="96" height="92" viewBox="0 0 96 92">
    <path d="M20-7H54L66 8H20z" fill="#f0f0f0" />
    <path d="M43-7h9v15h-9z" fill="#8a8a8a" />
    <rect x="5" y="7" width="86" height="30" fill="#fff" />
    <rect x="8" y="10" width="80" height="8" fill="#7d86a8" />
    <rect y="14" width="96" height="74" fill="#fff" />
    <rect x="3.500" y="17" width="89" height="67" fill="#71787c" />
    <g transform="rotate(1.500 48 57)">
      <rect x="18" y="38" width="61" height="39" rx="3" fill="#e2e3d6" />
      <rect x="21" y="44" width="19" height="23" fill="#3fa6bf" />
      <ellipse cx="30.500" cy="54" rx="5.500" ry="8" fill="#c6644d" />
      <path d="M24 52c0-9 13-9 13 0-3-4-10-4-13 0z" fill="#222" />
      <path d="M43 44h28M43 49h20M43 54h24M43 59h14M43 70h26" stroke="#a9a196" strokeWidth="1.500" />
      <rect x="56" y="60" width="8" height="12" fill="#a3a8a6" />
    </g>
  </svg>
);

const Trash = () => (
  <svg width="82" height="92" viewBox="0 0 82 92">
    <defs>
      <linearGradient id="bin" x1="0" x2="1" y1="0" y2="0">
        <stop offset="0" stopColor="#7a8082" />
        <stop offset=".2" stopColor="#5f6567" />
        <stop offset=".75" stopColor="#62686a" />
        <stop offset="1" stopColor="#7f8587" />
      </linearGradient>
    </defs>
    <path d="M1 6L12 87c1 5 6 9 12 10h34c6-1 11-5 12-10L81 6z" fill="url(#bin)" />
    <path d="M12 84c8 6 50 6 58 0l0 3c-1 5-6 9-12 10H24c-6-1-11-5-12-10z" fill="#868d8f" />
    <ellipse cx="41" cy="6" rx="40" ry="9.500" fill="#55595b" stroke="#878c8e" strokeWidth="1.500" />
  </svg>
);

const runningApps = [TextEditor, Activity, Calculator, ChromeApp, Elephant, Terminal, Editor, WhatsApp, Skitch, Office, Safari, LastPass, Preview, Telegram];

const menus: [string, number, number][] = [
  ["File", 84, 0], ["Edit", 90, 0], ["View", 98, -0.6], ["History", 128, 0], ["Bookmarks", 176, -0.29],
  ["Profiles", 134, 0], ["Tab", 84, -0.6], ["Window", 136, -0.5], ["Help", 80, 0],
];

const folders: [string, number][] = [
  ["TrueSight DAO", 250], ["Productivity", 220], ["Servers", 172], ["Administration", 247], ["Specialty", 188],
];
const moreFolders: [string, number, number][] = [["AGL - Consumer", 281, -0.1], ["AGL - Chocolatiers", 306, 0], ["AGL - Logistics", 540, 0]];

export default function App() {
  return (
    <>
      <GlobalStyle />
      <Desktop>
        <Wallpaper />
        <MenuBar>
          <Slot $ml={39} $w={30}>
            <FaApple size={33} color="#000" />
          </Slot>
          <Slot $ml={39}>
            <MenuItem $w={142} $bold $ls={0.25}>Chrome</MenuItem>
          </Slot>
          {menus.map(([label, w, ls]) => (
            <MenuItem key={label} $w={w} $ls={ls}>{label}</MenuItem>
          ))}
          <Spacer />
          <MenuTray />
        </MenuBar>

        <Window>
          <TabStrip>
            <Lights>
              <Light $c="#ff5f57" />
              <Light $c="#febc2e" />
              <Light $c="#28c840" />
            </Lights>
            <Tab $w={473} $pl={13} $pr={36}>
              <RendimentoFavicon>R/</RendimentoFavicon>
              <TabTitle $ml={17}>Exchange</TabTitle>
              <Cross />
            </Tab>
            <Tab $w={463} $pl={17} $pr={24} $active>
              <Globe />
              <TabTitle $ml={18}>Online Exchange</TabTitle>
              <Cross />
            </Tab>
            <Tab $w={481} $pl={28} $pr={29}>
              <XeFavicon>xe</XeFavicon>
              <TabTitle $ml={16} $fade>100 USD to BRL - US Dollars t</TabTitle>
              <Cross />
            </Tab>
            <TabDivider />
            <NewTab>
              <svg width="21" height="21" stroke="#fff" strokeWidth="3">
                <path d="M10.500 0V21M0 10.500H21" />
              </svg>
            </NewTab>
            <StripButton>
              <Chevron w={18} h={12} color="#fff" t={3.4} />
            </StripButton>
          </TabStrip>

          <Chrome>
            <Toolbar>
              <NavButton>
                <svg width="25" height="25" fill="none" stroke="#fff" strokeWidth="2.800">
                  <path d="M25 12.500H2M13 1.500L2 12.500L13 23.500" />
                </svg>
              </NavButton>
              <NavButton>
                <svg width="25" height="25" fill="none" stroke="#7398c2" strokeWidth="2.800">
                  <path d="M0 12.500H23M12 1.500L23 12.500L12 23.500" />
                </svg>
              </NavButton>
              <NavButton>
                <svg width="26" height="26" fill="none" stroke="#fff" strokeWidth="2.800">
                  <path d="M23 7A11 11 0 1024 15" />
                  <path d="M24 1V9.500H15.500" />
                </svg>
              </NavButton>
              <Omnibox>
                <SiteInfo>
                  <svg width="26" height="24" fill="none" stroke="#fff" strokeWidth="2.800">
                    <circle cx="6" cy="6" r="3.600" />
                    <circle cx="20" cy="18" r="3.600" />
                    <path d="M13 6h12M1 18h12" />
                  </svg>
                </SiteInfo>
                cambiorendimento.com.br
                <UrlPath>/cambioonline/Venda_novo.aspx?numBoleto=7118858</UrlPath>
                <Spacer />
                <MdGTranslate size={36} color="#c1c6ce" />
                <Slot $ml={27}>
                  <MdStarBorder size={39} color="#c5c9d0" />
                </Slot>
              </Omnibox>
              <Extensions />
              <ToolbarDivider />
              <Portrait />
              <Slot $ml={49}>
                <svg width="6" height="28" fill="#fff">
                  <circle cx="3" cy="3" r="3" />
                  <circle cx="3" cy="14" r="3" />
                  <circle cx="3" cy="25" r="3" />
                </svg>
              </Slot>
            </Toolbar>
            <Bookmarks>
              <Bookmark $w={270}>
                <SheetIcon />
                Experiment Logs
              </Bookmark>
              {folders.map(([label, w]) => (
                <Bookmark key={label} $w={w}>
                  <Folder />
                  {label}
                </Bookmark>
              ))}
              <Bookmark $w={299} $gap={13} $ls={-0.15}>
                <Drive />
                Sales and Marketi...
              </Bookmark>
              {moreFolders.map(([label, w, ls]) => (
                <Bookmark key={label} $w={w} $ls={ls}>
                  <Folder />
                  {label}
                </Bookmark>
              ))}
              <svg width="20" height="18" fill="none" stroke="#fff" strokeWidth="3.200">
                <path d="M1.500 1.500L9 9L1.500 16.500M10.500 1.500L18 9L10.500 16.500" />
              </svg>
            </Bookmarks>
          </Chrome>

          <Page>
            <Header>
              <Logo>
                Rendimento<LogoSlash>/</LogoSlash>
              </Logo>
              <Bell>
                <BellBadge>1</BellBadge>
                <BellIcon />
                <BellCaret />
              </Bell>
              <Greeting>
                <Hello>Hello,</Hello>
                <UserName>ZHIWEN TEH</UserName>
              </Greeting>
              <Hamburger>
                <HamburgerLine />
                <HamburgerLine />
                <HamburgerLine />
              </Hamburger>
            </Header>

            <StepBar>
              <Steps>
                <Step $w={247} $ls={0.82} $done>Calculate Values</Step>
                <StepArrow $w={45}><RightChevron /></StepArrow>
                <Step $w={158} $ls={0.65}>Recipient</Step>
                <StepArrow $w={46}><RightChevron /></StepArrow>
                <Step $w={393} $ls={0.48}>Acceptance of the operation</Step>
                <StepArrow $w={47}><RightChevron /></StepArrow>
                <Step $w={220} $ls={0.32}>Attach Document</Step>
              </Steps>
              <Rates>
                Rates may change in
                <Timer>
                  <FaRegClock size={19} />
                  02:29
                </Timer>
              </Rates>
            </StepBar>
            <Progress>
              <ProgressMark />
            </Progress>

            <Main>
              <Card>
                <CardTitle>Receipt Data</CardTitle>
                <Facts>
                  <Fact>
                    Received from
                    <FactValue $ls={0}>ZHIWEN TEH</FactValue>
                  </Fact>
                  <Fact>
                    In day
                    <FactValue $ls={0.25}>03/07/2024</FactValue>
                  </Fact>
                </Facts>
                <Rule />
                <Amounts>
                  <div>
                    <AmountLabel $ls={0.9}>Amount received</AmountLabel>
                    <AmountValue $ls={-0.31} $flagTop={0} $flagRight={0}>
                      USD 100.00
                      <UsFlag />
                    </AmountValue>
                  </div>
                  <div>
                    <AmountLabel $ls={0.8}>Total amount to be received</AmountLabel>
                    <AmountValue $ls={0.65} $flagTop={18} $flagRight={21}>
                      R$ 480.26
                      <BrFlag />
                    </AmountValue>
                  </div>
                </Amounts>
                <ReasonLabel>Reason for receipt</ReasonLabel>
                <Select>
                  Transfer of same ownership.
                  <Chevron w={17} h={10} color="#222" t={2.2} />
                </Select>
                <Hints>
                  <KnowMore>
                    <FaQuestionCircle size={22} />
                    Know more
                  </KnowMore>
                  <Purpose>
                    Purpose Description
                    <FaInfoCircle size={24} />
                  </Purpose>
                </Hints>
              </Card>
              <Summary>
                Operation Summary
                <Chevron w={20} h={12} color="#111" t={2.4} />
              </Summary>
            </Main>

            <Actions>
              <PillButton>TO GO BACK</PillButton>
              <PillButton $primary>
                <FaSync size={23} />
                ACCEPT RATE
              </PillButton>
            </Actions>

            <BottomShade />
            <ChatButton>
              <svg width="115" height="115" viewBox="0 0 115 115">
                <path d="M57.500 21C77 21 90.500 31 90.500 50C90.500 67 80 77 60 95V84C36 84 24.500 72 24.500 52C24.500 31 37 21 57.500 21Z" fill="#fff" />
              </svg>
            </ChatButton>
          </Page>
        </Window>

        <Dock>
          <DockCell $running><Finder /></DockCell>
          <DockCell><Launchpad /></DockCell>
          <DockCell>
            <Messages />
            <DockBadge>2</DockBadge>
          </DockCell>
          <DockCell><FaceTime /></DockCell>
          <DockCell>
            <Settings />
            <DockBadge>2</DockBadge>
          </DockCell>
          <DockDivider $l={26} $r={26} />
          {runningApps.map((Icon, i) => (
            <DockCell key={i} $running>
              <Icon />
            </DockCell>
          ))}
          <DockDivider $l={26} $r={27} />
          <DockCell $w={120}><Stack /></DockCell>
          <DockCell $w={120}><Trash /></DockCell>
        </Dock>
      </Desktop>
    </>
  );
}
